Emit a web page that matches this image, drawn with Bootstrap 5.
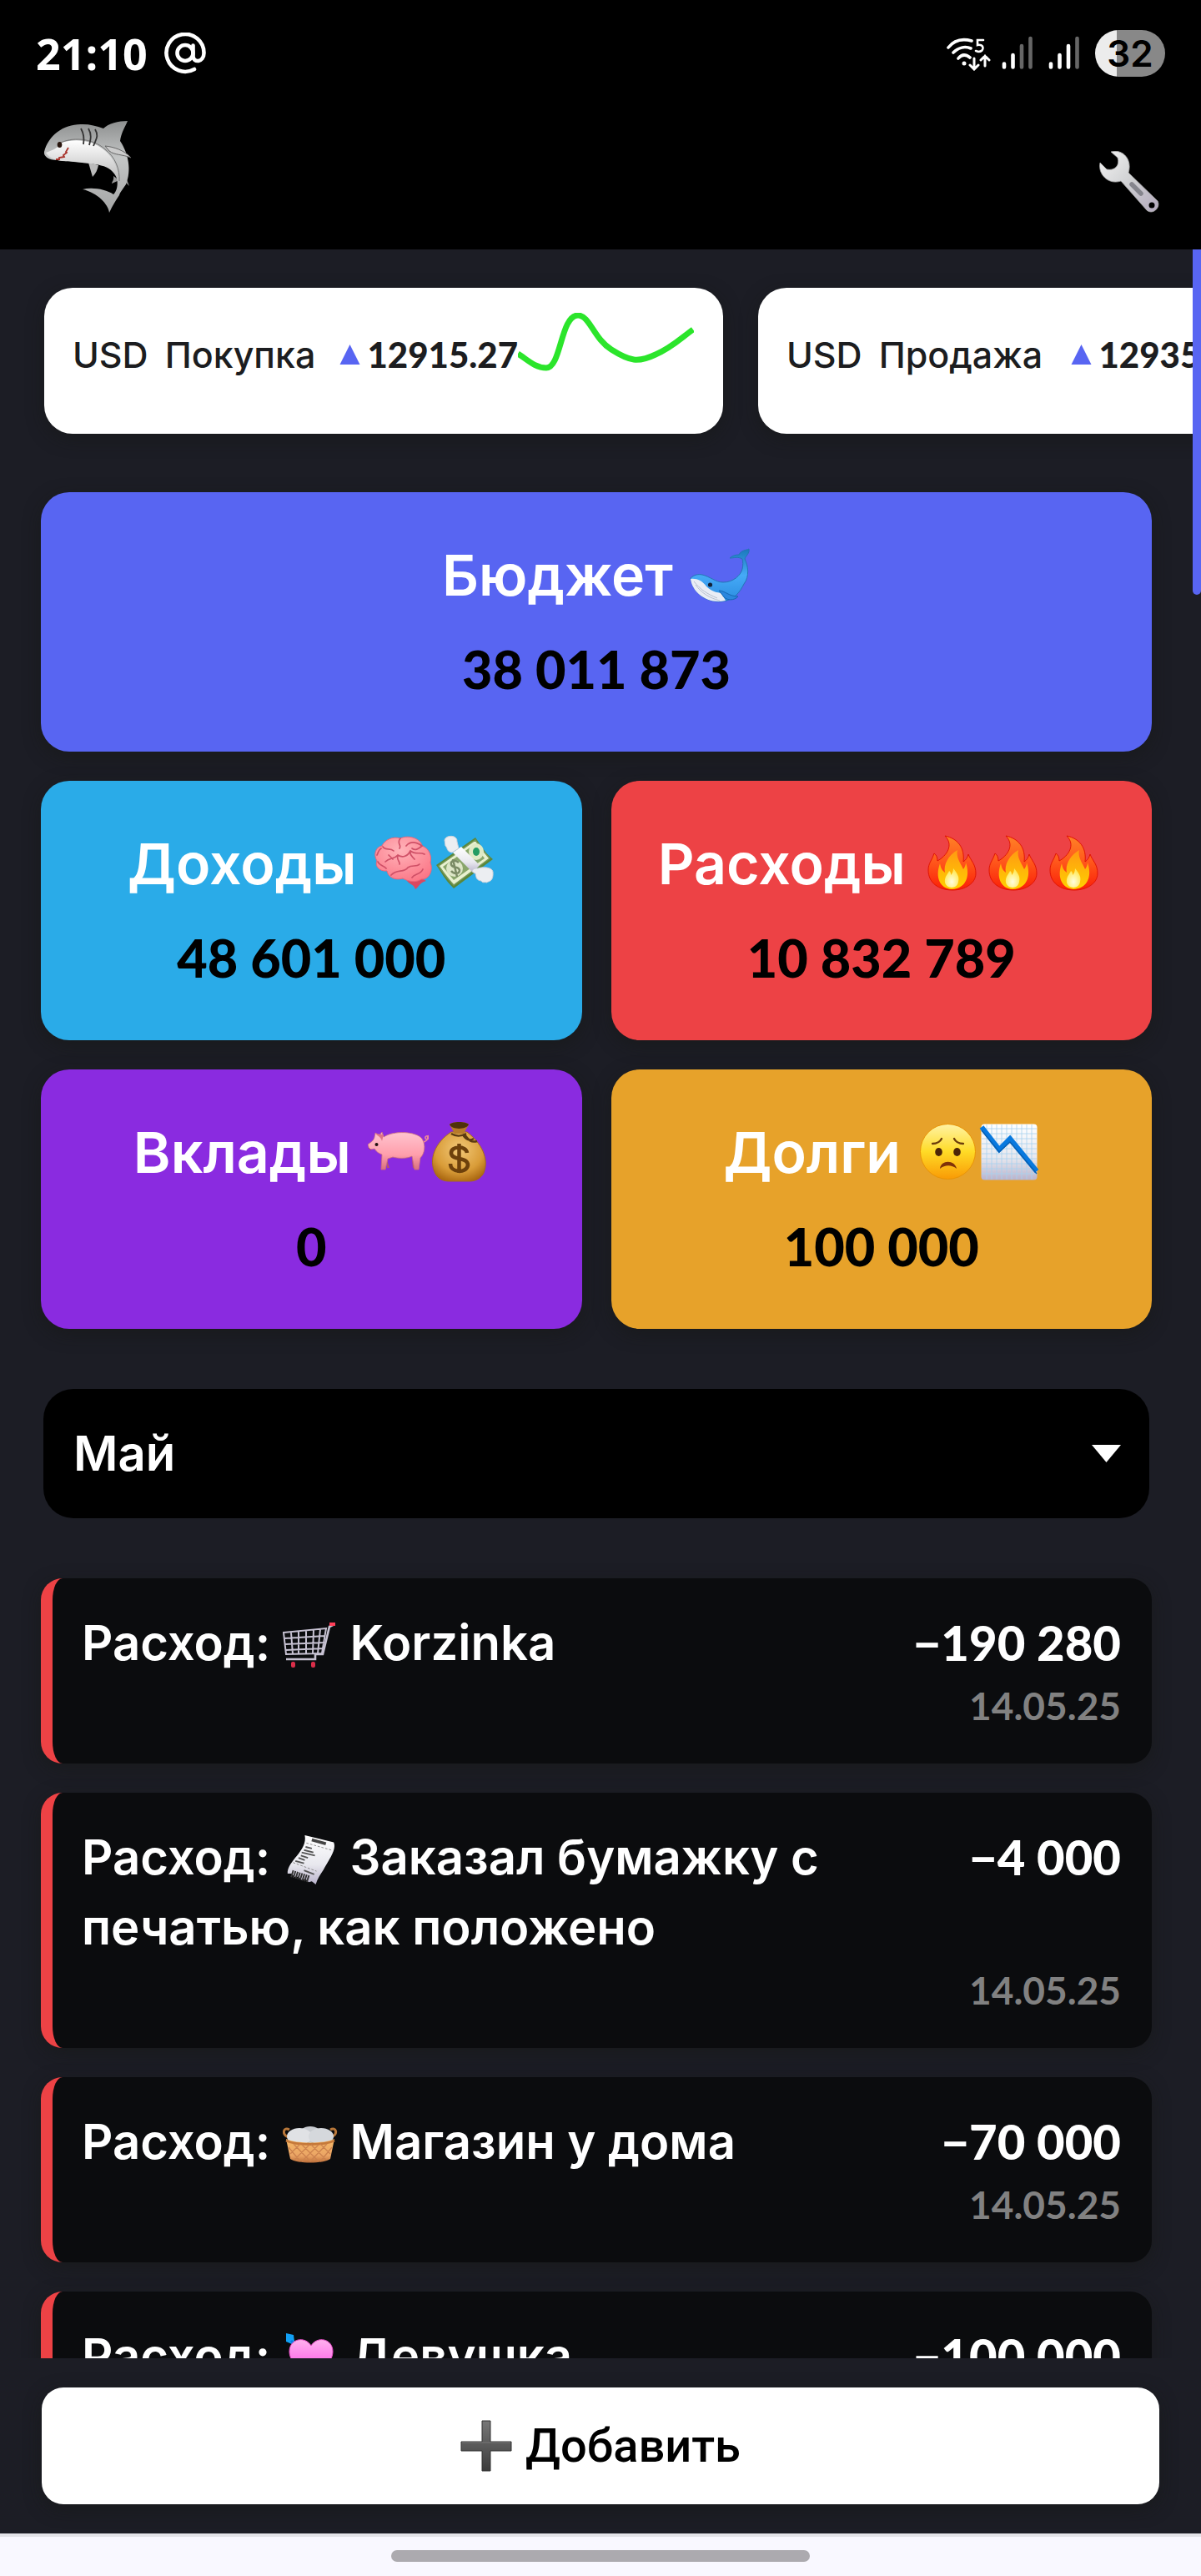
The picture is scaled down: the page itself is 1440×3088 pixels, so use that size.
<!DOCTYPE html>
<html lang="ru">
<head>
<meta charset="utf-8">
<meta name="viewport" content="width=device-width, initial-scale=1">
<title>Бюджет</title>
<link href="https://cdn.jsdelivr.net/npm/bootstrap@5.3.0/dist/css/bootstrap.min.css" rel="stylesheet">
<style>
:root{--ink:#1c1d25;--blurple:#5865f2;--danger-red:#ed4245;--text-font:Inter,"Noto Sans",sans-serif;--num-font:Lato,"Open Sans",sans-serif;--soft:0 6px 20px rgba(22,24,20,.5)}
body{background:var(--ink);font-family:var(--text-font);color:#fff}
.app{height:100vh}
.topbar{background:#000;padding:36px 43px 44px}
.status-row{height:56px}
.status-left{gap:20px}
.sim{margin-left:12px}
.clock{font:700 52px/56px "Open Sans",sans-serif}
.at-sign{width:50px;height:50px}
.battery{width:84px;height:56px;border-radius:28px;background:linear-gradient(90deg,#ececec 26px,#888 26px);color:#000;font:600 44px/56px Inter,sans-serif}
.brand-row{height:110px;margin-top:53px;padding:0 7px 0 9px}
.tool-btn{background:none;border:0;padding:0;line-height:0}
.view{min-height:0}
.feed{min-width:0;overflow:hidden;padding:46px 49px 0}
.rail{flex:none;width:10px}
.thumb{height:414px;background:var(--blurple);border-radius:0 0 5px 5px}
.rates{gap:42px;margin:0 -49px 70px 0;padding-left:4px}
.rate{flex:0 0 814px;height:175px;border-radius:34px;background:#fff;color:#1c1d20;padding:30px 35px 0 34px;font-size:43px;line-height:100px;font-weight:500;box-shadow:var(--soft);white-space:nowrap}
.rate-num{font:900 42px/100px var(--num-font)}
.gap-word{margin-right:20px}
.tiles{display:grid;grid-template-columns:1fr 1fr;gap:35px}
.tile{border-radius:34px;padding:50px 10px;gap:15px;text-align:center;box-shadow:var(--soft)}
.tile-wide{grid-column:span 2}
.tile h2{font-size:68px;line-height:98px;font-weight:600;gap:20px}
.tile-num{font:900 63px/98px var(--num-font);color:#000}
.tile svg{width:73px;height:72px;flex:none}
.month{appearance:none;width:auto;margin:72px 3px;height:155px;border:0;border-radius:36px;padding:0 35px 0 36px;color:#fff;font-size:58px;font-weight:600;background:#000 url("data:image/svg+xml,%3Csvg xmlns='http://www.w3.org/2000/svg' viewBox='0 0 35 21'%3E%3Cpath d='M0 0h35L17.5 21z' fill='%23fff'/%3E%3C/svg%3E") no-repeat right 34px center/35px 21px}
.ops{gap:35px}
.op{background:#0b0c0e;border-left:14px solid var(--danger-red);border-radius:26px;padding:35px 37px 35px 35px;box-shadow:var(--soft)}
.op-name{font-size:58px;line-height:84px;font-weight:600}
.op-name svg{width:66px;height:60px;vertical-align:-12px}
.op-sum{font:900 58px/84px var(--num-font);white-space:nowrap}
.op-date{font:700 46px/68px var(--num-font);color:#818181}
.dock{padding:35px 50px}
.add-btn{height:140px;border-radius:26px;background:#fff;border:0;color:#000;font:500 56px/84px Roboto,sans-serif;gap:16px;box-shadow:var(--soft)}
.sysnav{background:#f9f8ff;border-top:4px solid #e3e3e8;height:53px;padding-top:16px}
.pill{width:502px;height:14px;border-radius:7px;background:#acaaaf}
</style>
</head>
<body>
<svg width="0" height="0" class="position-absolute" aria-hidden="true">
<defs>
<linearGradient id="gShark" x1="0" y1="0" x2="0" y2="1"><stop offset="0" stop-color="#8d8f8f"/><stop offset=".4" stop-color="#c4c6c6"/><stop offset="1" stop-color="#a3a4a4"/></linearGradient>
<linearGradient id="gBelly" x1="0" y1="0" x2="0" y2="1"><stop offset="0" stop-color="#fff"/><stop offset="1" stop-color="#bbb"/></linearGradient>
<linearGradient id="gSteel" x1="0" y1="0" x2="1" y2="1"><stop offset="0" stop-color="#f4f4f4"/><stop offset=".5" stop-color="#cfd0d2"/><stop offset="1" stop-color="#b3a9bd"/></linearGradient>
<linearGradient id="gWhale" x1="0" y1="0" x2="0" y2="1"><stop offset="0" stop-color="#1a78bb"/><stop offset=".5" stop-color="#45aaf7"/><stop offset="1" stop-color="#2b8de0"/></linearGradient>
<linearGradient id="gFire" x1="0" y1="0" x2="0" y2="1"><stop offset="0" stop-color="#ff8226"/><stop offset=".45" stop-color="#ff5a1c"/><stop offset="1" stop-color="#fb1f08"/></linearGradient>
<linearGradient id="gFire2" x1="0" y1="0" x2="0" y2="1"><stop offset="0" stop-color="#ff9a12"/><stop offset="1" stop-color="#ffd000"/></linearGradient>
<radialGradient id="gCore" cx=".5" cy=".7" r=".6"><stop offset="0" stop-color="#fffde0"/><stop offset="1" stop-color="#ffe95a"/></radialGradient>
<radialGradient id="gBrain" cx=".45" cy=".3" r=".8"><stop offset="0" stop-color="#ffb3b9"/><stop offset="1" stop-color="#fb7283"/></radialGradient>
<linearGradient id="gPig" x1="0" y1="0" x2="0" y2="1"><stop offset="0" stop-color="#ffc4cf"/><stop offset=".6" stop-color="#ff9fac"/><stop offset="1" stop-color="#d9707f"/></linearGradient>
<radialGradient id="gBag" cx=".5" cy=".35" r=".7"><stop offset="0" stop-color="#f2c878"/><stop offset=".65" stop-color="#d99c38"/><stop offset="1" stop-color="#a8650f"/></radialGradient>
<linearGradient id="gFace" x1="0" y1="0" x2="0" y2="1"><stop offset="0" stop-color="#fff3a6"/><stop offset=".5" stop-color="#ffdb26"/><stop offset="1" stop-color="#f99a05"/></linearGradient>
<linearGradient id="gPaper" x1="0" y1="0" x2="0" y2="1"><stop offset="0" stop-color="#fff"/><stop offset=".6" stop-color="#e8e8ee"/><stop offset="1" stop-color="#b9b3cc"/></linearGradient>
<linearGradient id="gHeart" x1="0" y1="0" x2="0" y2="1"><stop offset="0" stop-color="#ffb1ee"/><stop offset="1" stop-color="#ff40e6"/></linearGradient>
<linearGradient id="gBasket" x1="0" y1="0" x2="0" y2="1"><stop offset="0" stop-color="#f5b866"/><stop offset=".7" stop-color="#eba565"/><stop offset="1" stop-color="#bd6f39"/></linearGradient>
<linearGradient id="gPlus" x1="0" y1="0" x2="0" y2="1"><stop offset="0" stop-color="#777"/><stop offset="1" stop-color="#3c3c3c"/></linearGradient>
<symbol id="fire" viewBox="-7 -3 73 72"><path d="M20 0C35 3 44 14 42 31c3-2 5-5 6-9 3 8 9 12 9 23 0 12-13 20-28 20C12 65 0 56 0 41 0 33 4 30 7 21c3 2 4 5 4 9C22 24 31 11 20 0z" fill="url(#gFire)" stroke="#e01402"/><path d="M35 17c-2 9 4 16 7 23 2-3 3-5 3-8 5 14 2 31-17 32C14 63 8 50 14 33c1 5 2 8 6 11-2-9 4-21 15-27z" fill="url(#gFire2)"/><path d="M30 39c3 4 8 9 6 16-1 9-14 9-16 1-1-7 4-11 5-14 2 1 2 3 2 5 2-2 3-5 3-8z" fill="url(#gCore)"/></symbol>
<symbol id="rise" viewBox="0 0 24 24"><path d="M12 0l12 24H0z" fill="#5865f2"/></symbol>
</defs>
</svg>

<div class="app d-flex flex-column">
<header class="topbar">
  <div class="status-row d-flex align-items-center justify-content-between">
    <div class="status-left d-flex align-items-center">
      <span class="clock">21:10</span>
      <svg class="at-sign" viewBox="0 0 50 50" fill="none" stroke="#fff" stroke-width="4.6" stroke-linecap="round" aria-hidden="true"><circle cx="25" cy="24.500" r="9.500"/><path d="M34.500 15.500V28c0 9 13 8 13-3.500A22.500 22.500 0 1 0 36 44"/></svg>
    </div>
    <div class="d-flex align-items-center">
      <svg width="54" height="42" viewBox="0 0 54 42" fill="none" stroke="#fff" stroke-width="3.600" stroke-linecap="round" aria-label="Wi-Fi"><path d="M2 14C9 5 19 3 30 6M8 20c6-6 14-8 21-5M14 27c4-5 9-5 14-1"/><circle cx="21" cy="33" r="2.500" fill="#fff" stroke="none"/><path d="M44 5h-7v6c8-2 9 8 1 8l-3-1" stroke-width="2.600"/><path d="M33 27v12m-5-4 5 5 5-5M46 36V24m-5 5 5-5 5 5" stroke-width="3"/></svg>
      <svg class="ms-2" width="44" height="42" viewBox="0 0 44 42" stroke-width="4.600" stroke-linecap="round" aria-label="Сеть 1"><path d="M7 33.500v4M17.500 23v14.500" stroke="#fff"/><path d="M28 12v25.500M38.500 3v34.500" stroke="#666"/></svg>
      <svg class="sim me-3" width="44" height="42" viewBox="0 0 44 42" stroke-width="4.600" stroke-linecap="round" aria-label="Сеть 2"><path d="M7 33.500v4M17.500 23v14.500M28 12v25.500" stroke="#fff"/><path d="M38.500 3v34.500" stroke="#666"/></svg>
      <span class="battery text-center">32</span>
    </div>
  </div>
  <div class="brand-row d-flex justify-content-between align-items-end">
    <svg width="106" height="110" viewBox="0 0 106 110" role="img" aria-label="Акула">
      <path d="M84 66c1 5-2 7-2 9l9-4zM98 65l5 13-8-8z" fill="#999"/>
      <path d="M54 50l5 17c4-4 6-9 7-14z" fill="#bbb"/>
      <path d="M1 37C6 17 25 3 47 4c9 0 17 2 25 5C78 3 90 0 101 0c-3 7-8 15-9 24 10 15 14 35 7 52-3 5-7 9-8 13-4 6-8 12-12 21-1-10-14-24-32-28 12-3 28 0 37 6 5-4 8-18-1-30-10-9-35-7-66-11C6 47 0 42 1 37z" fill="url(#gShark)"/>
      <path d="M3 38c8-3 14-5 19-12 18-6 38-2 50 8 14 11 19 27 17 36C80 50 65 53 31 48 18 49 7 45 3 38z" fill="url(#gBelly)"/>
      <path d="M19 27c14-8 40-7 55 7 12 9 18 24 17 38" fill="none" stroke="#777" stroke-width="1"/>
      <path d="M74 30c10 1 23 5 31 14-10-4-20-3-26-8z" fill="#ccc" stroke="#666" stroke-width="1"/>
      <path d="M45 9c4 7 4 13 3 19M54 9c4 7 3 12 1 20M62 10c5 8 1 12-2 20" fill="none" stroke="#333" stroke-width="1.800"/>
      <path d="M30 32l-3 5 1 1-4 3 1 2-6 1v2l-4 0" fill="none" stroke="#a8322a" stroke-width="1.800"/>
      <ellipse cx="19.500" cy="28.500" rx="2.800" ry="3.500" fill="#28150d"/>
    </svg>
    <button class="tool-btn" type="button" aria-label="Настройки"><svg width="72" height="74" viewBox="0 0 72 74"><path d="M14 1C28-3 40 10 35 26L70 60c4 8-6 17-13 11L26 36C11 41-2 28 1 14l8 8c10 2 16-5 13-14z" fill="url(#gSteel)" stroke="#aaa" stroke-width=".8"/><path d="M39 40l11 11" stroke="#85858d" stroke-width="5.500" stroke-linecap="round"/><circle cx="63" cy="65" r="3.500" fill="#000"/></svg></button>
  </div>
</header>

<div class="view d-flex flex-fill">
<main class="feed flex-fill">
  <section class="rates d-flex">
    <div class="rate d-flex align-items-start">
      <span class="gap-word">USD</span><span>Покупка</span>
      <span class="ms-auto d-flex align-items-center"><svg class="me-2" width="25" height="24" aria-hidden="true"><use href="#rise"/></svg><span class="rate-num">12915.27</span></span>
      <svg width="211" height="100" viewBox="0 0 211 100" fill="none" stroke="#2be52b" stroke-width="7" aria-hidden="true"><path d="M0 49C10 55 20 66 34 66C52 66 51 3 72 3C86 3 91 31 112 44C134 58 144 60 165 50C184 42 196 30 210 20"/></svg>
    </div>
    <div class="rate d-flex align-items-start">
      <span class="gap-word">USD</span><span>Продажа</span>
      <span class="ms-auto d-flex align-items-center"><svg class="me-2" width="25" height="24" aria-hidden="true"><use href="#rise"/></svg><span class="rate-num">12935.27</span></span>
      <svg width="190" height="100" aria-hidden="true"></svg>
    </div>
  </section>

  <section class="tiles">
    <article class="tile tile-wide d-flex flex-column" style="background:#5865f2">
      <h2 class="d-flex justify-content-center align-items-center m-0">Бюджет
        <svg viewBox="-1 -5 73 72" aria-hidden="true"><path d="M0 35c4-4 9-5 14-4 9 2 16 9 25 9 12 0 21-8 23-16 1-5 1-8 0-12-5-3-10-1-15-1 3-3 7-4 11-4C61 1 66 2 70 0c1 6-4 8-5 12 4 8 6 21-1 30-5 10-12 20-27 21C17 64 3 52 0 35z" fill="url(#gWhale)" stroke="#2475b5"/><path d="M0 36c7-1 14 2 19 9 7 7 13 7 18 8l5 9C20 67 2 52 0 36z" fill="#e9edf5"/><path d="M6 43c7 10 17 16 29 19M4 39c8 10 16 15 28 20" fill="none" stroke="#b7c0ce"/><path d="M34 50c7 0 12 7 23 7-4 5-15 6-19-2z" fill="#2b87de" stroke="#1568b2"/><circle cx="23.500" cy="43" r="2.600" fill="#142236"/></svg>
      </h2>
      <div class="tile-num">38 011 873</div>
    </article>
    <article class="tile d-flex flex-column" style="background:#2aabe8">
      <h2 class="d-flex justify-content-center align-items-center m-0">Доходы
        <span class="d-flex">
        <svg viewBox="-2 -4 73 72" aria-hidden="true"><path d="M38 50l14-3 10 6c-8 2-10 9-13 10-2-7-11-7-11-13z" fill="#dc4860"/><path d="M31 2C42-3 56 3 57 11c9 3 12 13 10 20 4 10-2 21-11 20-7 5-17 2-22-1-10 3-18-2-19-9C6 42 0 35 3 29-2 21 2 12 9 11 12 4 22-1 31 2z" fill="url(#gBrain)" stroke="#e8667b"/><path d="M10 12c3 5 9 1 13 5M31 2c-5 6 2 8-1 12M38 11c6-7 13-4 19 0-5 4-8 6-12 3M13 30c5-5 11-3 15-8 6 4 12 1 15-5 6 5 12 1 17 4M17 22l5 5M28 22c-2 6 3 8 2 11M43 18c-1 5 3 6 5 9M20 46c7-8 15-2 20-9 5-4 10 0 14-4M4 30c2 5 7 4 10 8M45 49c3-5 10-3 13-10M3 22c2-3 1-6 5-8" fill="none" stroke="#cf5067" stroke-width="1.700" stroke-linecap="round"/></svg>
        <svg viewBox="-2 -3 73 72" aria-hidden="true"><path d="M1 35L48 2c7 10 11 18 21 26L22 63C11 52 8 45 1 35z" fill="#5b8739"/><path d="M4 36L48 5c6 9 11 15 17 22L22 59C14 51 9 43 4 36z" fill="#e8f1d0" stroke="#78995a" stroke-width="1.500"/><path d="M9 37L47 10l12 17-37 26z" fill="#89a66b"/><ellipse cx="49" cy="19" rx="9" ry="10" fill="#dfeac5"/><ellipse cx="49" cy="19" rx="4" ry="5" fill="#239c62"/><circle cx="23" cy="39" r="10" fill="#dde6c7"/><path d="M28 32c-6-5-12 0-8 4 3 3 8 0 9 5 0 5-7 5-10 1M21 28l5 21" fill="none" stroke="#7b8b65" stroke-width="2.500"/><path d="M21 20l10-7 22 22-8 9z" fill="url(#gPaper)"/><path d="M11 5C13-2 27-1 26 7l2 8-8 5c-7-1-5-6-8-8zM48 45c-6-1-4-7 3-6 5-2 17-2 18 4 1 13-6 11-7 13-4-1-5 1-7-2-6-1-6-4-7-9z" fill="#eceef2" stroke="#cbd0d8"/></svg>
        </span>
      </h2>
      <div class="tile-num">48 601 000</div>
    </article>
    <article class="tile d-flex flex-column" style="background:#ed4245">
      <h2 class="d-flex justify-content-center align-items-center m-0">Расходы
        <span class="d-flex"><svg aria-hidden="true"><use href="#fire"/></svg><svg aria-hidden="true"><use href="#fire"/></svg><svg aria-hidden="true"><use href="#fire"/></svg></span>
      </h2>
      <div class="tile-num">10 832 789</div>
    </article>
    <article class="tile d-flex flex-column" style="background:#8a2be0">
      <h2 class="d-flex justify-content-center align-items-center m-0">Вклады
        <span class="d-flex">
        <svg viewBox="0 -12 73 72" aria-hidden="true"><path d="M23 34l3 9h-3zM53 33l5 10h-4z" fill="#b95567"/><path d="M0 15c2-2 5-3 6-5 2-2 2-4 3-9l5 3 3-4 2 6c12-8 39-7 46 2 5 8 3 18-2 23l-2 14h-5l-3-16c-6 3-16 3-23 1l-6 2-3 13h-5l1-18c-5-2-7-4-9-7-3 1-7 1-7-2z" fill="url(#gPig)" stroke="#cb6d7c" stroke-width=".8"/><path d="M67 12c7-3 5-10 2-6-1 4 6 4 3-2" fill="none" stroke="#ee8898" stroke-width="1.600"/><path d="M9 2c3 3 7 4 8 9l2-8" fill="#de7485"/><circle cx="10.500" cy="15" r="2" fill="#22120f"/><path d="M1 19l3 3" stroke="#a84858"/></svg>
        <svg viewBox="-5 0 73 72" aria-hidden="true"><path d="M22 12C3 24-6 45 3 62c4 7 10 9 17 9h24c8 0 14-4 17-10C68 44 58 25 41 12z" fill="url(#gBag)" stroke="#a76a1a"/><path d="M20 3c3-4 20-4 23 0l-6 11H26z" fill="#b77a2b"/><path d="M20 3c3-4 20-4 23 0-2 6-20 7-23 0z" fill="#4f310a"/><path d="M22 14c7 4 12 3 18 0m-4 1c3 6 8 8 13 5M38 15c5 7 8 10 15 8" fill="none" stroke="#5c3a10" stroke-width="2.500"/><path d="M41 37c-1-9-20-9-19 1 2 9 20 3 20 14-2 10-21 9-21-2M31.500 26v35" fill="none" stroke="#6d400b" stroke-width="4.500"/></svg>
        </span>
      </h2>
      <div class="tile-num">0</div>
    </article>
    <article class="tile d-flex flex-column" style="background:#e7a22a">
      <h2 class="d-flex justify-content-center align-items-center m-0">Долги
        <span class="d-flex">
        <svg viewBox="-3 -2 73 72" aria-hidden="true"><circle cx="33.500" cy="33.500" r="33" fill="url(#gFace)" stroke="#e99405"/><path d="M15 24c5 0 9-2 11-6M52 24c-5 0-9-2-11-6" fill="none" stroke="#6c3d0b" stroke-width="2.300" stroke-linecap="round"/><ellipse cx="22.500" cy="34" rx="4.300" ry="5" fill="#4c2508"/><ellipse cx="44.500" cy="34" rx="4.300" ry="5" fill="#4c2508"/><path d="M24 54c1-11 18-11 20 0-6-5-14-5-20 0z" fill="#803109"/></svg>
        <svg viewBox="-3 -2 73 72" aria-hidden="true"><rect x=".5" y=".5" width="67" height="67" rx="4" fill="url(#gPaper)"/><path d="M7 1v66M13 1v66M19 1v66M25 1v66M31 1v66M37 1v66M43 1v66M49 1v66M55 1v66M61 1v66M1 6h66M1 12h66M1 18h66M1 24h66M1 30h66M1 36h66M1 42h66M1 48h66M1 54h66M1 60h66" stroke="#a7d2ef" stroke-width=".8"/><path d="M1 4l21 27L35 18l32 39" fill="none" stroke="#0879df" stroke-width="6"/><path d="M1 8l21 26L35 22l32 38" fill="none" stroke="#075fb2" stroke-width="1.500"/></svg>
        </span>
      </h2>
      <div class="tile-num">100 000</div>
    </article>
  </section>

  <div class="d-flex"><select class="month flex-fill" aria-label="Месяц"><option selected>Май</option><option>Июнь</option></select></div>

  <section class="ops d-flex flex-column">
    <article class="op">
      <div class="d-flex justify-content-between align-items-start gap-5"><div class="op-name">Расход: <svg viewBox="0 -3 66 60" aria-hidden="true"><g fill="none" stroke="#c7c2d2" stroke-width="2"><path d="M1 12l51-5-5 30-43 1zM2 19l49-3M3 26l47-2M4 33l44-2M10 12l2 26M19 11v27M28 10v27M37 9l-1 28M45 8l-3 29"/><path d="M62 2l-6 3-8 33h-9v6H4" stroke-width="2.600"/></g><path d="M56 0h7v4h-7z" fill="#ff3f59"/><g fill="#d92e49"><rect x="10" y="47" width="5" height="7" rx="2"/><rect x="34" y="47" width="5" height="7" rx="2"/></g></svg> Korzinka</div><div class="op-sum">−190 280</div></div>
      <div class="op-date text-end">14.05.25</div>
    </article>
    <article class="op">
      <div class="d-flex justify-content-between align-items-start gap-5"><div class="op-name">Расход: <svg viewBox="-1 -1 66 64" aria-hidden="true"><path d="M25 0l37 9c4 9-6 22-13 35-4 6-8 12-10 19l-5-4-4 1-4-4-5 1-4-4-5 0-4-4-5 0C2 33 29 20 25 0z" fill="url(#gPaper)"/><path d="M34 6l18 5" stroke="#444" stroke-width="4"/><path d="M27 10l32 9M10 35l30 11" stroke="#888" stroke-dasharray="3 2"/><path d="M26 15l8 2M24 19l12 3M21 22l17 4M20 26l9 3M17 29l8 3M13 33l11 3M24 45l13 5" stroke="#555" stroke-width="2"/><path d="M8 49l22 7" stroke="#333" stroke-width="9" stroke-dasharray="2 1"/></svg> Заказал бумажку с печатью, как положено</div><div class="op-sum">−4 000</div></div>
      <div class="op-date text-end">14.05.25</div>
    </article>
    <article class="op">
      <div class="d-flex justify-content-between align-items-start gap-5"><div class="op-name">Расход: <svg viewBox="0 -9 66 60" aria-hidden="true"><g fill="none" stroke="#b9783a" stroke-width="3"><path d="M7 13C-2 9 1 0 8 4M58 13c9-4 6-13-1-9"/></g><ellipse cx="33" cy="10" rx="14" ry="10" fill="#c8cbd0"/><ellipse cx="20" cy="12" rx="15" ry="10" fill="#e0e2e5"/><ellipse cx="46" cy="12" rx="15" ry="10" fill="#d5d8dc"/><path d="M4 15c12 6 46 6 58 0l-5 24c-8 6-40 6-48 0z" fill="url(#gBasket)"/><path d="M4 17c12 6 46 6 58 0" fill="none" stroke="#c5793a" stroke-width="3"/><path d="M7 25l14 17M13 21l20 21M23 22l20 20M34 22l18 18M45 21l12 12M59 25L45 42M53 21L33 42M43 22L23 42M32 22L14 40M21 21L9 33" stroke="#cc824e" stroke-width="1.300"/></svg> Магазин у дома</div><div class="op-sum">−70 000</div></div>
      <div class="op-date text-end">14.05.25</div>
    </article>
    <article class="op">
      <div class="d-flex justify-content-between align-items-start gap-5"><div class="op-name">Расход: <svg viewBox="-1 0 66 60" aria-hidden="true"><path d="M3 0l9 2 1 8-3 3-7-3z" fill="#12a0f5"/><path d="M9 9l6 6" stroke="#0879df" stroke-width="3"/><path d="M33 15c7-12 26-9 26 7 0 15-20 28-26 33C27 50 7 37 7 22 7 6 26 3 33 15z" fill="url(#gHeart)" stroke="#e94fc8"/></svg> Девушка</div><div class="op-sum">−100 000</div></div>
      <div class="op-date text-end">14.05.25</div>
    </article>
  </section>
</main>
<div class="rail" aria-hidden="true"><div class="thumb"></div></div>
</div>

<div class="dock"><button class="add-btn w-100 d-flex justify-content-center align-items-center" type="button"><svg width="62" height="62" viewBox="0 0 62 62" aria-hidden="true"><path d="M26 1h10v25h25v11H36v24H26V37H1V26h25z" fill="url(#gPlus)" stroke="#333"/><path d="M2 27h58" stroke="#777"/></svg>Добавить</button></div>
<footer class="sysnav"><div class="pill mx-auto"></div></footer>
</div>
<script src="https://cdn.jsdelivr.net/npm/bootstrap@5.3.0/dist/js/bootstrap.bundle.min.js"></script>
</body>
</html>
